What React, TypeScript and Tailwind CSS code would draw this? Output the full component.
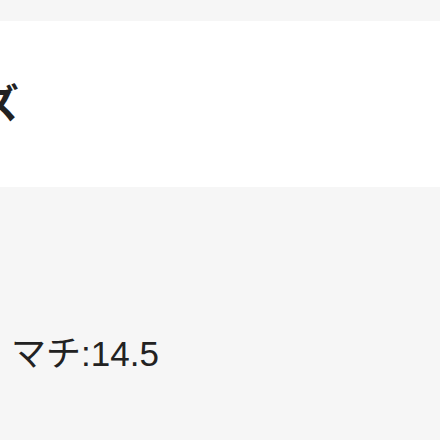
const App = () => {
  return (
    <div className="w-[440px] h-[440px] overflow-hidden bg-[#f6f6f6] font-['Liberation_Sans','Noto_Sans_CJK_JP',sans-serif] text-[#222]">
      <div className="h-[21px]" />
      <div className="h-[166px] bg-white flex items-center overflow-hidden">
        <h2 className="ml-[-100px] text-[40px] font-bold leading-none whitespace-nowrap">サイズ</h2>
      </div>
      <div className="pl-[11px] pt-[149px]">
        <p className="text-[35px] leading-none whitespace-nowrap">マチ:14.5</p>
      </div>
    </div>
  )
}

export default App
